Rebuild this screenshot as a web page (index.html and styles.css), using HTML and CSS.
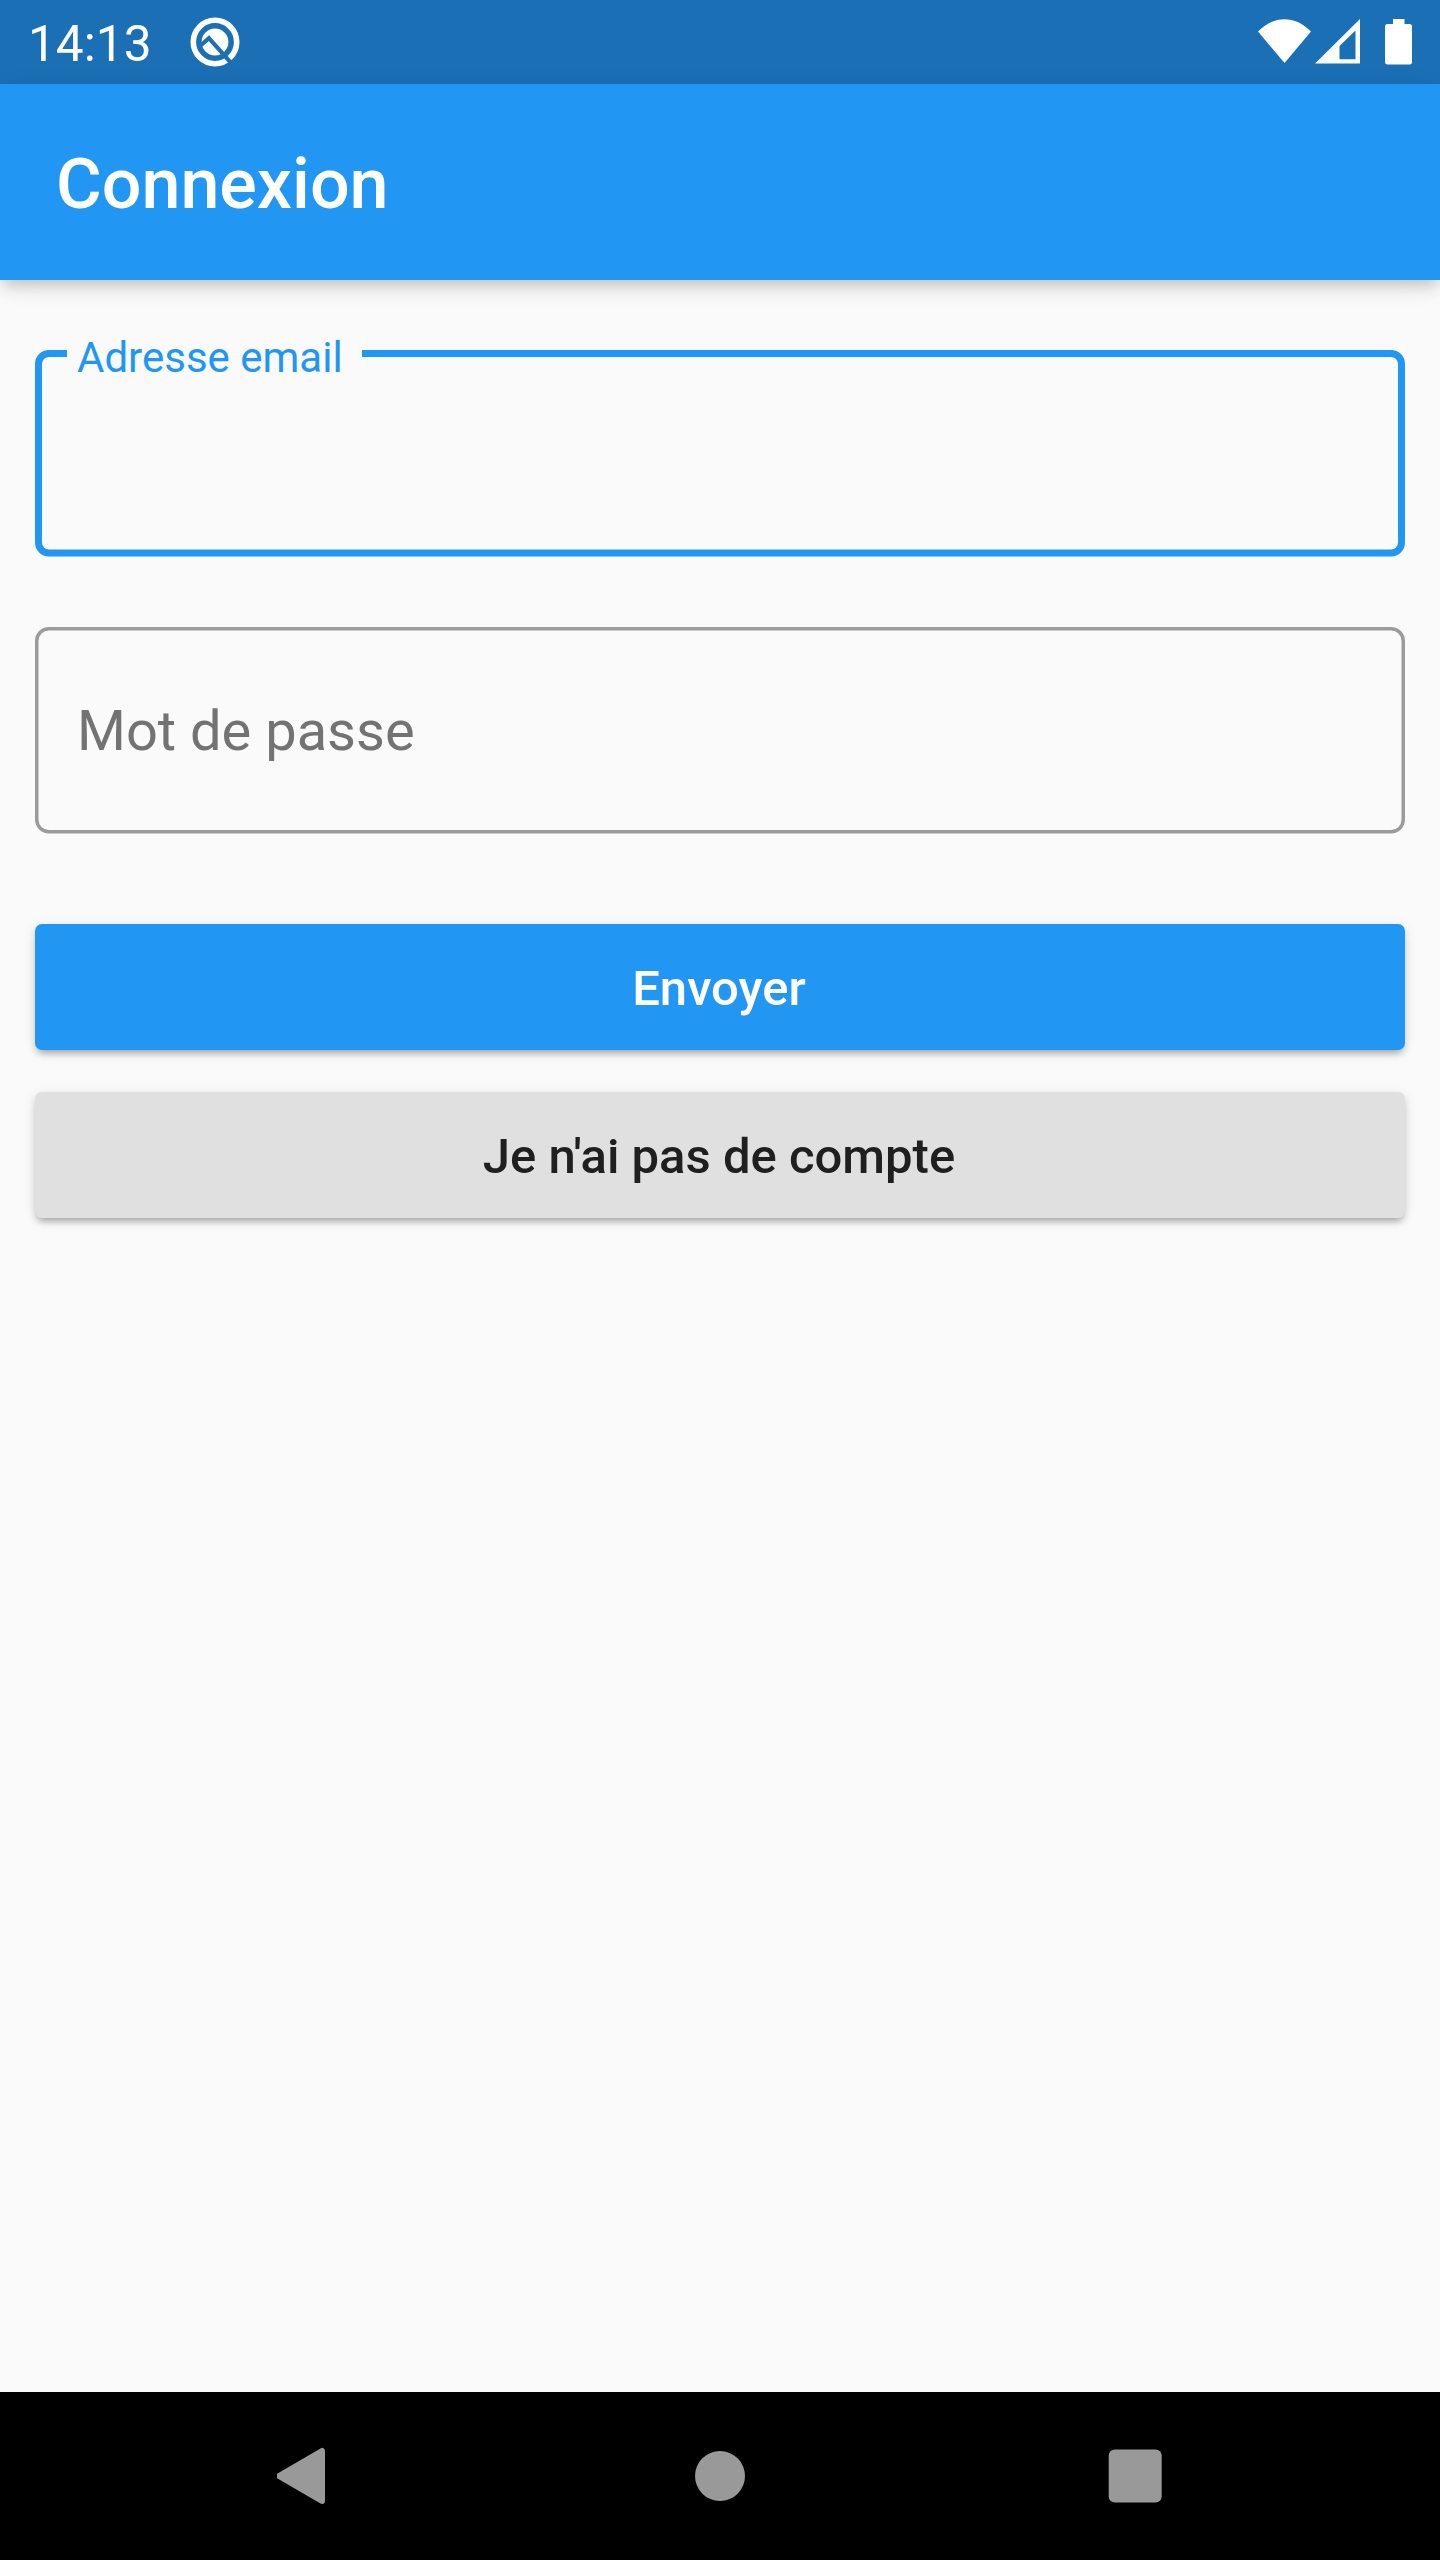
FILE: index.html
```html
<!DOCTYPE html>
<html lang="fr">
<head>
<meta charset="utf-8">
<title>Connexion</title>
<link rel="stylesheet" href="styles.css">
</head>
<body>
<div class="screen">
  <div class="status-bar">
    <span class="clock">14:13</span>
    <svg class="q-icon" width="50" height="50" viewBox="0 0 50 50">
      <circle cx="25" cy="25" r="21.7" fill="none" stroke="#fff" stroke-width="5.6"/>
      <circle cx="25" cy="25" r="13.4" fill="#fff"/>
      <path d="M9.500 29.500L18.900 21.200L41.500 46.400" fill="none" stroke="#1a6fb5" stroke-width="4.200"/>
    </svg>
    <svg class="system-icons" width="156" height="50" viewBox="0 0 156 50">
      <path d="M0 14.5C16 -2 37 -2 53 14.5L26.5 46Z" fill="#fff"/>
      <path fill-rule="evenodd" d="M57 46.5L102 2V46.5ZM81.500 42.300H97.500V13.500L81.500 29Z" fill="#fff"/>
      <path d="M135 2H146.500V7H151.500Q154 7 154 9.500V45Q154 47.500 151.500 47.500H129.500Q127 47.500 127 45V9.500Q127 7 129.500 7H135Z" fill="#fff"/>
    </svg>
  </div>
  <header class="app-bar"><h1>Connexion</h1></header>
  <main class="form">
    <div class="field focused">
      <svg class="outline" width="1370" height="207" viewBox="0 0 1370 207">
        <path d="M32 3.500H14A10.500 10.500 0 0 0 3.500 14V192.500A10.500 10.500 0 0 0 14 203H1356A10.500 10.500 0 0 0 1366.500 192.500V14A10.500 10.500 0 0 0 1356 3.500H327" fill="none" stroke="#2196f3" stroke-width="7"/>
      </svg>
      <label class="floating-label">Adresse email</label>
    </div>
    <div class="field">
      <svg class="outline" width="1370" height="207" viewBox="0 0 1370 207">
        <rect x="1.750" y="1.750" width="1366.500" height="203" rx="12.250" fill="none" stroke="#9b9b9b" stroke-width="3.500"/>
      </svg>
      <label class="label">Mot de passe</label>
    </div>
    <div class="actions">
      <button class="button primary">Envoyer</button>
      <button class="button">Je n'ai pas de compte</button>
    </div>
  </main>
  <nav class="nav-bar">
    <svg width="56" height="60" viewBox="0 0 56 60"><path d="M2 30L45 5V55Z" fill="#999" stroke="#999" stroke-width="6" stroke-linejoin="round"/></svg>
    <svg width="56" height="60" viewBox="0 0 56 60"><circle cx="28" cy="30" r="25" fill="#999"/></svg>
    <svg width="56" height="60" viewBox="0 0 56 60"><rect x="1.700" y="3.500" width="53" height="53" rx="6" fill="#999"/></svg>
  </nav>
</div>
</body>
</html>
```
FILE: styles.css
```css
* { box-sizing: border-box; }
body { margin: 0; font-family: Roboto, sans-serif; }
.screen {
  width: 1440px;
  height: 2560px;
  display: flex;
  flex-direction: column;
  background: #fafafa;
  overflow: hidden;
}
.status-bar {
  height: 84px;
  flex: none;
  display: flex;
  align-items: center;
  padding: 0 26px 0 28px;
  background: #1a6fb5;
  color: #fff;
}
.clock { width: 122px; font-size: 49.6px; line-height: 84px; padding-top: 4px; }
.q-icon { margin-left: 40px; }
.system-icons { margin-left: auto; }
.app-bar {
  height: 196px;
  flex: none;
  display: flex;
  align-items: center;
  padding: 4px 56px 0;
  background: #2196f3;
  color: #fff;
  box-shadow: 0 7px 14px -3.5px rgba(0,0,0,.2), 0 14px 17.5px rgba(0,0,0,.04), 0 3.5px 35px rgba(0,0,0,.03);
}
.app-bar h1 { margin: 0; font-size: 70px; font-weight: 500; line-height: 82px; }
.form { flex: 1; padding: 70px 35px 0; display: flex; flex-direction: column; }
.field {
  position: relative;
  height: 207px;
  margin-bottom: 70px;
  display: flex;
  align-items: center;
  padding: 0 42px;
  font-size: 56px;
  color: #737373;
}
.outline { position: absolute; left: 0; top: 0; }
.label { line-height: 66px; }
.floating-label {
  align-self: flex-start;
  margin-top: -17px;
  font-size: 42px;
  line-height: 49px;
  color: #2196f3;
}
.actions { display: flex; flex-direction: column; gap: 42px; padding-top: 20px; }
.button {
  height: 126px;
  border: 0;
  border-radius: 7px;
  background: #e0e0e0;
  color: #1f1f1f;
  font: 500 49px/57px Roboto, sans-serif;
  padding: 2px 2px 0 0;
  box-shadow: 0 7px 7px -5px rgba(0,0,0,.2), 0 4px 7px rgba(0,0,0,.14), 0 3px 14px rgba(0,0,0,.08);
}
.primary { background: #2196f3; color: #fff; }
.nav-bar {
  height: 168px;
  flex: none;
  display: flex;
  align-items: center;
  justify-content: center;
  gap: 359px;
  background: #000;
}
```
